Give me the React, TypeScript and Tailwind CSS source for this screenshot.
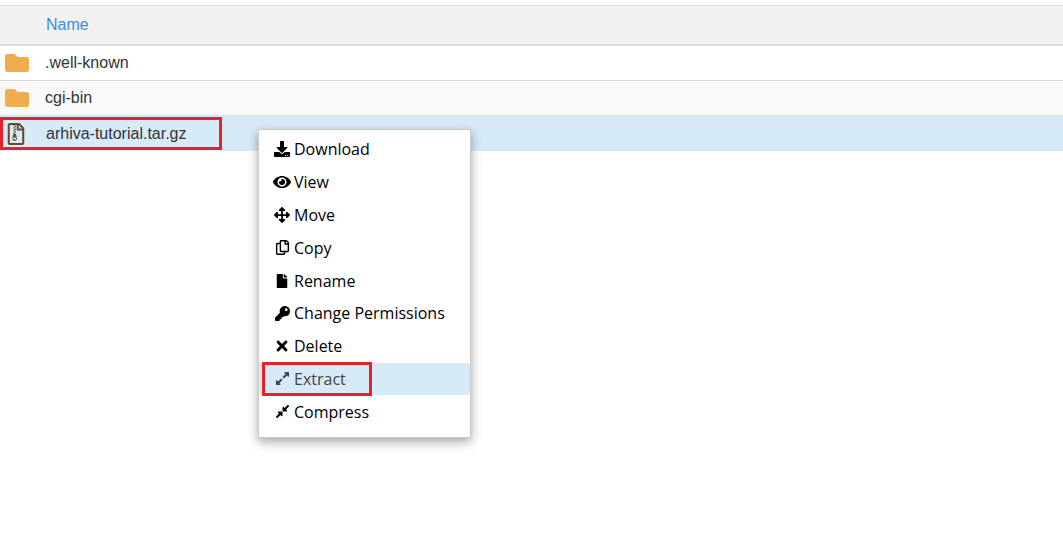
import React from "react";
import { FaDownload, FaEye, FaArrowsAlt, FaRegCopy, FaFile, FaKey, FaTimes, FaExpandAlt, FaCompressAlt, FaFolder, FaRegFileArchive } from "react-icons/fa";

const items: [string, React.ReactNode][] = [
  ["Download", <FaDownload size={16} />],
  ["View", <FaEye size={18} />],
  ["Move", <FaArrowsAlt size={16} />],
  ["Copy", <FaRegCopy size={15} />],
  ["Rename", <FaFile size={14} />],
  ["Change Permissions", <FaKey size={15} />],
  ["Delete", <FaTimes size={16} />],
  ["Extract", <FaExpandAlt size={15} />],
  ["Compress", <FaCompressAlt size={15} />],
];

export default function App() {
  return (
    <div className="relative w-[1063px] h-[537px] bg-white overflow-hidden" style={{ fontFamily: "Arial, 'Liberation Sans', sans-serif" }}>
      <div className="mt-[5px] border-t border-[#ddd]">
        <div className="h-[40px] bg-[#f1f1f1] border-b-2 border-[#ddd] flex items-center pl-[46px] text-[16px] text-[#3a8ed8]">Name</div>
        <div className="h-[35px] border-b border-[#ddd] flex items-center text-[16px] text-[#333]">
          <FaFolder className="ml-[5px] mr-[16px] text-[#f0ad4e]" size={24} />.well-known
        </div>
        <div className="h-[35px] border-b border-[#ddd] bg-[#f9f9f9] flex items-center text-[16px] text-[#333]">
          <FaFolder className="ml-[5px] mr-[16px] text-[#f0ad4e]" size={24} />cgi-bin
        </div>
        <div className="h-[35px] bg-[#d6eaf8] flex items-center text-[16px] text-[#333] relative">
          <div className="absolute left-0 top-[1px] w-[222px] h-[33px] border-[3px] border-[#e8202a]" />
          <FaRegFileArchive className="ml-[5px] mr-[19px] text-[#6b4a2a]" size={22} />arhiva-tutorial.tar.gz
        </div>
      </div>
      <div className="absolute left-[258px] top-[129px] w-[213px] h-[309px] bg-white border border-[#ccc] shadow-[0_4px_10px_rgba(0,0,0,0.35)] pt-[3px]" style={{ fontFamily: "'Open Sans', sans-serif" }}>
        {items.map(([label, icon]) => (
          <div key={label} className={`h-[32.8px] flex items-center pl-[14px] gap-[3px] text-[16px] relative ${label === "Extract" ? "bg-[#d6eaf8] text-[#444]" : "text-black"}`}>
            {label === "Extract" && <div className="absolute left-[3px] top-[-1px] w-[110px] h-[34px] border-[3px] border-[#e8202a]" />}
            <span className="w-[18px] flex justify-center">{icon}</span>{label}
          </div>
        ))}
      </div>
    </div>
  );
}
